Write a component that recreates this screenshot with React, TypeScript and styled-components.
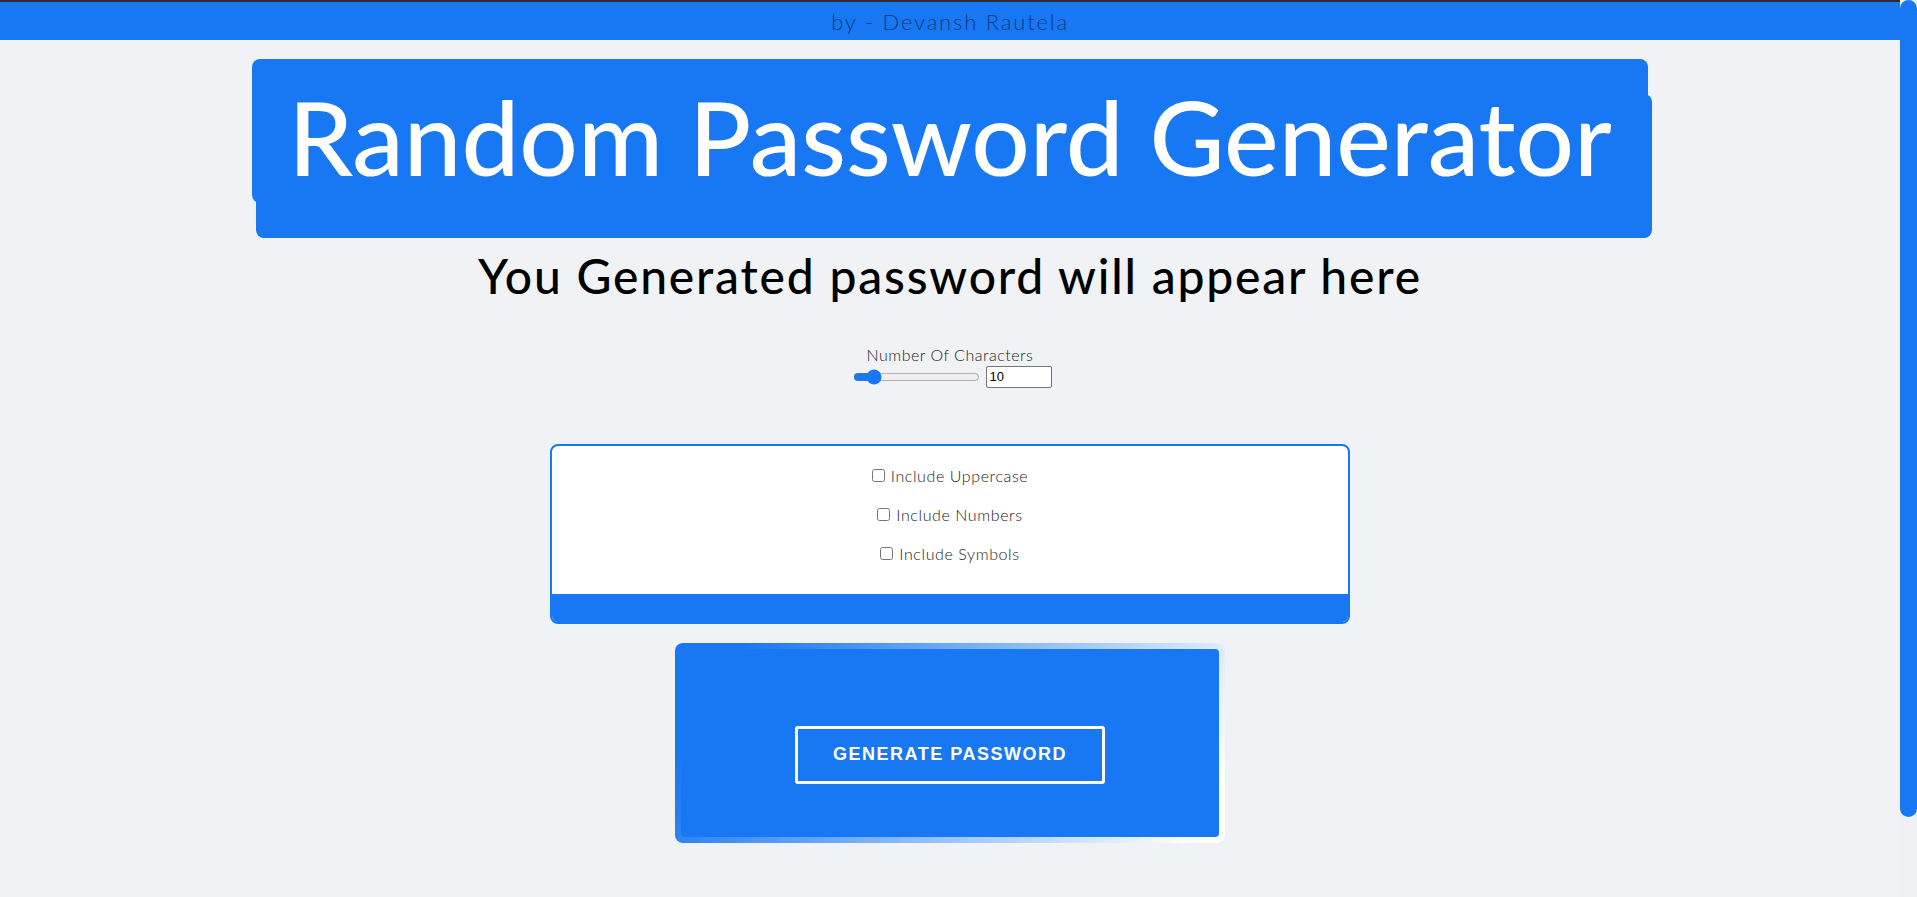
import React, { useState } from "react";
import styled, { createGlobalStyle } from "styled-components";

const BLUE = "#1877f2";

const GlobalStyle = createGlobalStyle`
  html, body {
    margin: 0;
    padding: 0;
    height: 100%;
    overflow: hidden;
    background: #f0f2f5;
    font-family: "Lato", "Open Sans", sans-serif;
  }
`;

const Shell = styled.div`
  display: flex;
  height: 100vh;
  overflow: hidden;
`;

const Page = styled.div`
  flex: 1;
  min-width: 0;
`;

const ScrollTrack = styled.div`
  width: 17px;
  flex-shrink: 0;
  background: #eef0f4;
`;

const ScrollThumb = styled.div`
  height: 817px;
  border-radius: 9px;
  background: ${BLUE};
`;

const Header = styled.header`
  height: 38px;
  border-top: 2px solid #2b2d31;
  background: ${BLUE};
  color: #0e3b80;
  font-size: 22px;
  font-weight: 300;
  letter-spacing: 1.8px;
  display: flex;
  align-items: center;
  justify-content: center;
`;

const Main = styled.main`
  display: flex;
  flex-direction: column;
  align-items: center;
`;

const Title = styled.h1`
  margin: 19px 0 0;
  width: 1396px;
  height: 144px;
  box-sizing: border-box;
  padding-top: 10px;
  border-radius: 8px;
  background: ${BLUE};
  box-shadow: 4px 35px 0 ${BLUE};
  color: #fff;
  font-size: 103px;
  font-weight: 500;
  line-height: 1;
  display: flex;
  align-items: center;
  justify-content: center;
`;

const Subtitle = styled.h2`
  margin: 44px 0 0;
  font-size: 48px;
  font-weight: 500;
  letter-spacing: 1.8px;
  line-height: 1.2;
  color: #000;
`;

const LengthBox = styled.div`
  margin-top: 40px;
  display: flex;
  flex-direction: column;
  align-items: center;
`;

const LengthLabel = styled.label`
  font-size: 16px;
  font-weight: 300;
  letter-spacing: 0.5px;
  color: #222;
  margin-bottom: 2px;
`;

const SliderRow = styled.div`
  display: flex;
  align-items: center;
  gap: 6px;
  padding-left: 4px;
`;

const Range = styled.input`
  accent-color: ${BLUE};
  width: 127px;
  margin: 0;
`;

const NumberField = styled.input`
  width: 58px;
  height: 18px;
  padding: 1px 3px;
  border: 1px solid #767676;
  border-radius: 2px;
  font-family: "Liberation Sans", Arial, sans-serif;
  font-size: 13px;
  background: #fff;
`;

const OptionsCard = styled.div`
  margin-top: 56px;
  width: 800px;
  height: 180px;
  box-sizing: border-box;
  border: 2px solid ${BLUE};
  border-radius: 8px;
  background: #fff;
  overflow: hidden;
  display: flex;
  flex-direction: column;
`;

const OptionList = styled.div`
  flex: 1;
  display: flex;
  flex-direction: column;
  align-items: center;
  gap: 17px;
  padding-top: 19px;
`;

const Option = styled.label`
  display: flex;
  align-items: center;
  font-size: 16px;
  font-weight: 300;
  letter-spacing: 0.6px;
  color: #222;
  height: 22px;

  input {
    margin: 0 6px 0 0;
    width: 13px;
    height: 13px;
  }
`;

const CardFooter = styled.div`
  height: 28px;
  background: ${BLUE};
`;

const GenerateFrame = styled.div`
  margin-top: 19px;
  width: 550px;
  height: 200px;
  box-sizing: border-box;
  padding: 6px;
  border-radius: 8px;
  background: linear-gradient(120deg, ${BLUE} 10%, #ffffff 95%);
`;

const GeneratePanel = styled.div`
  height: 100%;
  box-sizing: border-box;
  padding-top: 24px;
  border-radius: 4px;
  background: ${BLUE};
  display: flex;
  align-items: center;
  justify-content: center;
`;

const GenerateButton = styled.button`
  width: 310px;
  height: 58px;
  border: 3px solid #fff;
  border-radius: 3px;
  background: ${BLUE};
  color: #fff;
  font-family: "Liberation Sans", Arial, sans-serif;
  font-size: 18px;
  font-weight: 700;
  letter-spacing: 1.5px;
  cursor: pointer;
`;

const App = () => {
  const [length, setLength] = useState(10);

  return (
    <Shell>
      <GlobalStyle />
      <Page>
        <Header>by - Devansh Rautela</Header>
        <Main>
          <Title>Random Password Generator</Title>
          <Subtitle>You Generated password will appear here</Subtitle>
          <LengthBox>
            <LengthLabel htmlFor="len">Number Of Characters</LengthLabel>
            <SliderRow>
              <Range
                id="len"
                type="range"
                min={6}
                max={40}
                value={length}
                onChange={(e) => setLength(Number(e.target.value))}
              />
              <NumberField
                type="number"
                value={length}
                onChange={(e) => setLength(Number(e.target.value))}
              />
            </SliderRow>
          </LengthBox>
          <OptionsCard>
            <OptionList>
              <Option>
                <input type="checkbox" /> Include Uppercase
              </Option>
              <Option>
                <input type="checkbox" /> Include Numbers
              </Option>
              <Option>
                <input type="checkbox" /> Include Symbols
              </Option>
            </OptionList>
            <CardFooter />
          </OptionsCard>
          <GenerateFrame>
            <GeneratePanel>
              <GenerateButton>GENERATE PASSWORD</GenerateButton>
            </GeneratePanel>
          </GenerateFrame>
        </Main>
      </Page>
      <ScrollTrack>
        <ScrollThumb />
      </ScrollTrack>
    </Shell>
  );
};

export default App;
